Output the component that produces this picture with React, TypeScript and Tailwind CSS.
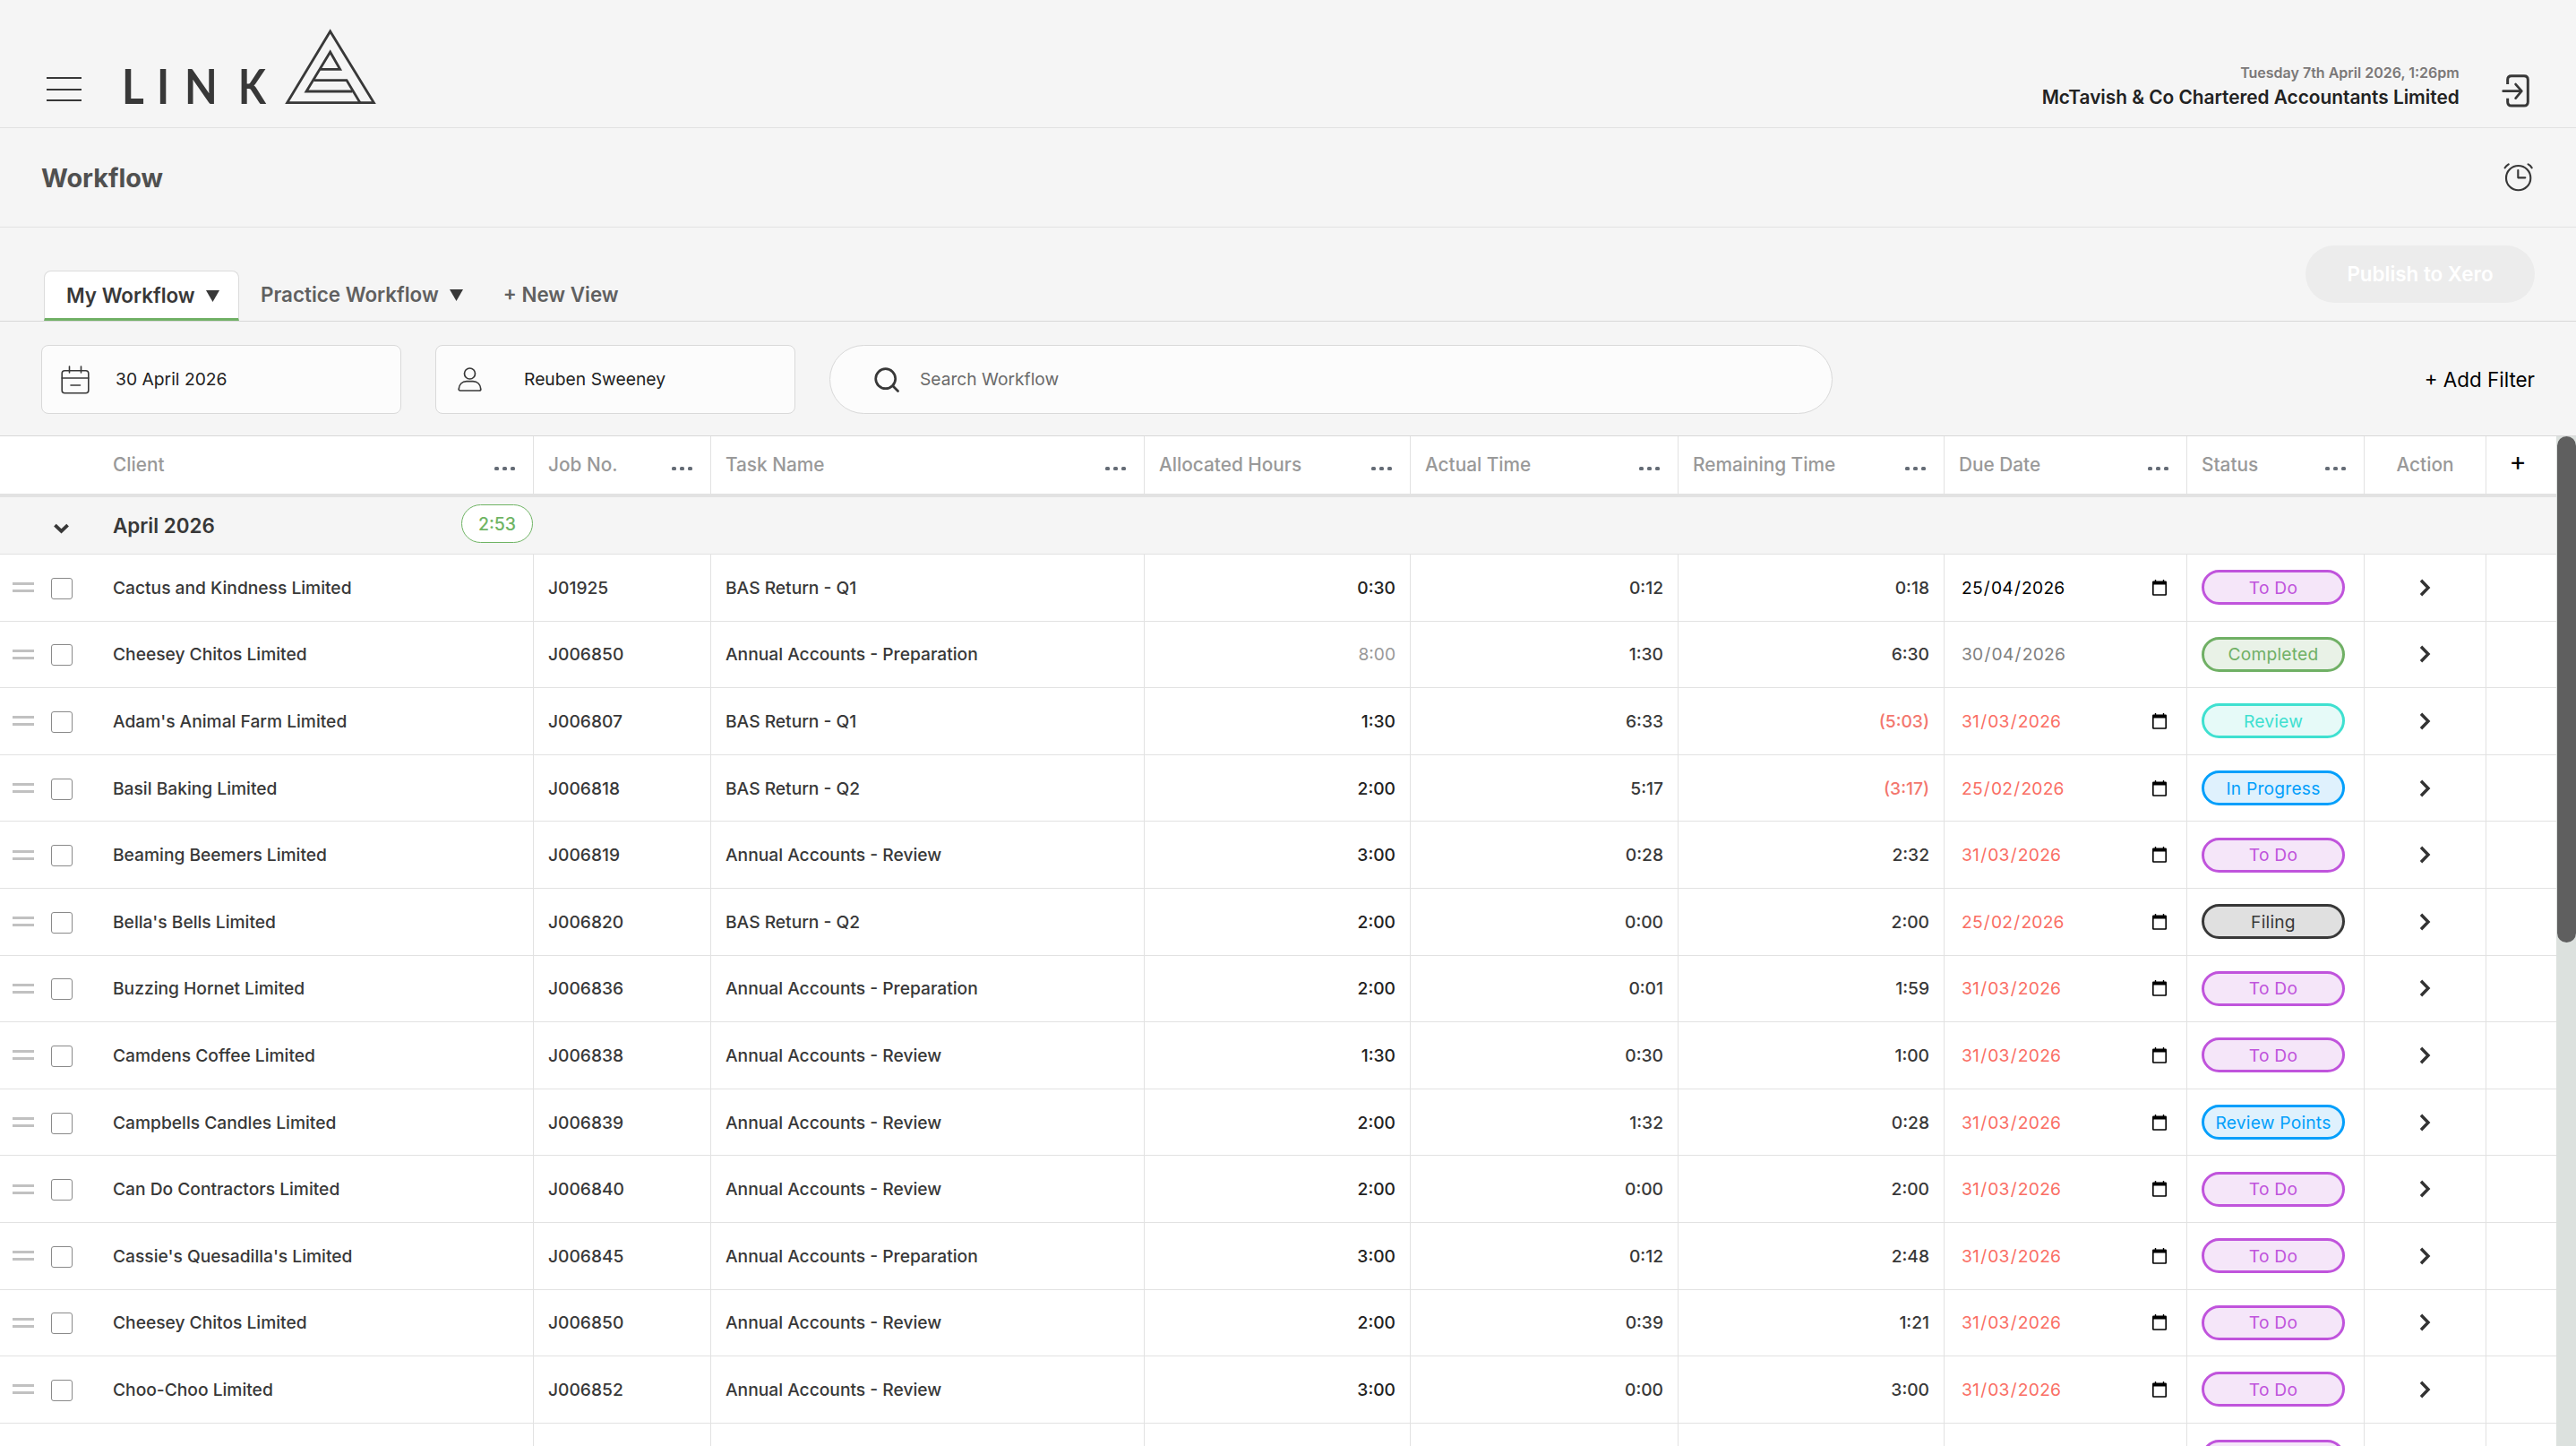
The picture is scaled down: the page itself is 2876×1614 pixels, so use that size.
import clsx from 'clsx';

type Status = 'To Do' | 'Completed' | 'Review' | 'In Progress' | 'Filing' | 'Review Points';

interface Task {
  client: string;
  job: string;
  task: string;
  allocated: string;
  actual: string;
  remaining: string;
  due: string;
  status: Status;
}

const tasks: Task[] = [
  { client: 'Cactus and Kindness Limited', job: 'J01925', task: 'BAS Return - Q1', allocated: '0:30', actual: '0:12', remaining: '0:18', due: '25/04/2026', status: 'To Do' },
  { client: 'Cheesey Chitos Limited', job: 'J006850', task: 'Annual Accounts - Preparation', allocated: '8:00', actual: '1:30', remaining: '6:30', due: '30/04/2026', status: 'Completed' },
  { client: "Adam's Animal Farm Limited", job: 'J006807', task: 'BAS Return - Q1', allocated: '1:30', actual: '6:33', remaining: '(5:03)', due: '31/03/2026', status: 'Review' },
  { client: 'Basil Baking Limited', job: 'J006818', task: 'BAS Return - Q2', allocated: '2:00', actual: '5:17', remaining: '(3:17)', due: '25/02/2026', status: 'In Progress' },
  { client: 'Beaming Beemers Limited', job: 'J006819', task: 'Annual Accounts - Review', allocated: '3:00', actual: '0:28', remaining: '2:32', due: '31/03/2026', status: 'To Do' },
  { client: "Bella's Bells Limited", job: 'J006820', task: 'BAS Return - Q2', allocated: '2:00', actual: '0:00', remaining: '2:00', due: '25/02/2026', status: 'Filing' },
  { client: 'Buzzing Hornet Limited', job: 'J006836', task: 'Annual Accounts - Preparation', allocated: '2:00', actual: '0:01', remaining: '1:59', due: '31/03/2026', status: 'To Do' },
  { client: 'Camdens Coffee Limited', job: 'J006838', task: 'Annual Accounts - Review', allocated: '1:30', actual: '0:30', remaining: '1:00', due: '31/03/2026', status: 'To Do' },
  { client: 'Campbells Candles Limited', job: 'J006839', task: 'Annual Accounts - Review', allocated: '2:00', actual: '1:32', remaining: '0:28', due: '31/03/2026', status: 'Review Points' },
  { client: 'Can Do Contractors Limited', job: 'J006840', task: 'Annual Accounts - Review', allocated: '2:00', actual: '0:00', remaining: '2:00', due: '31/03/2026', status: 'To Do' },
  { client: "Cassie's Quesadilla's Limited", job: 'J006845', task: 'Annual Accounts - Preparation', allocated: '3:00', actual: '0:12', remaining: '2:48', due: '31/03/2026', status: 'To Do' },
  { client: 'Cheesey Chitos Limited', job: 'J006850', task: 'Annual Accounts - Review', allocated: '2:00', actual: '0:39', remaining: '1:21', due: '31/03/2026', status: 'To Do' },
  { client: 'Choo-Choo Limited', job: 'J006852', task: 'Annual Accounts - Review', allocated: '3:00', actual: '0:00', remaining: '3:00', due: '31/03/2026', status: 'To Do' },
];

const statusStyle: Record<Status, string> = {
  'To Do': 'border-[#c054dc] bg-[#f5e6f9] text-[#c054dc]',
  Completed: 'border-[#70b065] bg-[#e9f2e7] text-[#70b065]',
  Review: 'border-[#3fe0d0] bg-[#e6faf8] text-[#3fe0d0]',
  'In Progress': 'border-[#039ffb] bg-[#dff1fd] text-[#039ffb]',
  Filing: 'border-[#383838] bg-[#e0e0e0] text-[#383838]',
  'Review Points': 'border-[#039ffb] bg-[#dff1fd] text-[#039ffb]',
};

const GRID = 'grid grid-cols-[596px_198px_484px_297px_299px_297px_271px_198px_136px_78px]';
const CELL = 'flex items-center border-r border-[#e2e2e2] px-4';

function Logo() {
  return (
    <div className="flex items-end">
      <div className="mb-[3px] flex font-['Lato',sans-serif] text-[53px] leading-[53px] font-bold text-[#383838]">
        <span className="w-[39px]">
          <span className="inline-block origin-left scale-x-90">L</span>
        </span>
        <span className="w-[31px]">
          <span className="inline-block origin-left scale-x-90">I</span>
        </span>
        <span className="w-[60px]">
          <span className="inline-block origin-left scale-x-90">N</span>
        </span>
        <span className="w-[51px]">
          <span className="inline-block origin-left scale-x-85">K</span>
        </span>
      </div>
      <svg className="mb-[7px] h-[88.3px] w-[105px]" viewBox="831 30 315 265" fill="none" stroke="#383838" strokeWidth="8.5">
        <path d="M986 45 L842 284 H1132 Z" />
        <path d="M1060 246 H906 L986 114 L1019 172 H953" />
        <path d="M931 209 H1041 L1086 284" />
      </svg>
    </div>
  );
}

function LogoutIcon() {
  return (
    <svg className="h-[38.7px] w-[33.3px]" viewBox="157 65 100 116" fill="none" stroke="#383838">
      <path strokeWidth="9" d="M177 101 V86 Q177 73 190 73 H232 Q245 73 245 86 V160 Q245 173 232 173 H190 Q177 173 177 160 V148" />
      <path strokeWidth="8" strokeLinecap="round" strokeLinejoin="round" d="M162 124 H223 M204 101 L224 124 L204 148" />
    </svg>
  );
}

function AlarmIcon() {
  return (
    <svg className="size-[33.3px]" viewBox="164 362 100 100" fill="none" stroke="#383838" strokeWidth="6.4">
      <circle cx="214" cy="415" r="41" />
      <path strokeLinecap="round" strokeLinejoin="round" d="M213 389 V414 H237" />
      <path strokeLinecap="round" d="M169 381 Q173 374 181 369 M247 369 Q255 373 259 381" />
    </svg>
  );
}

function CalendarIcon() {
  return (
    <svg className="h-8 w-8" viewBox="0 0 32 32" fill="none" stroke="#383838" strokeWidth="1.6" strokeLinecap="round">
      <rect x="1.2" y="5.7" width="29.6" height="25" rx="3" />
      <path d="M1.2 14 H30.8 M9.5 1 V8 M22.5 1 V8 M11 22 H21.5" />
    </svg>
  );
}

function UserIcon() {
  return (
    <svg className="h-[27px] w-[27px]" viewBox="0 0 27 27" fill="none" stroke="#383838" strokeWidth="1.7">
      <circle cx="13.5" cy="7" r="6" />
      <path d="M1.2 24.2 C1.6 19 5 15.7 10 15.7 H17 C22 15.7 25.4 19 25.8 24.2 Q25.8 26 24.2 26 H2.8 Q1.2 26 1.2 24.2 Z" />
    </svg>
  );
}

function SearchIcon() {
  return (
    <svg className="size-7" viewBox="0 0 28 28" fill="none" stroke="#383838" strokeWidth="2.7" strokeLinecap="round">
      <circle cx="12.7" cy="12.7" r="11" />
      <path d="M20.8 20.8 L26.5 26.5" />
    </svg>
  );
}

// native date picker glyph
function PickerIcon() {
  return (
    <svg className="h-[18px] w-4" viewBox="0 0 16 18" fill="#000">
      <path fillRule="evenodd" d="M2.8 0 H4.2 V1.5 H11.8 V0 H13.2 V1.5 H14.8 Q16 1.5 16 2.8 V16.6 Q16 17.8 14.8 17.8 H1.2 Q0 17.8 0 16.6 V2.8 Q0 1.5 1.2 1.5 H2.8 Z M1.6 5.6 V16.3 H14.4 V5.6 Z" />
    </svg>
  );
}

function Caret() {
  return (
    <svg className="h-[13px] w-[15px]" viewBox="0 0 15 13" fill="#383838">
      <path d="M0 0 H15 L7.5 13 Z" />
    </svg>
  );
}

function Dots() {
  return (
    <span className="mt-2 mr-1 flex gap-1">
      <span className="h-1 w-[5px] rounded-[1.5px] bg-[#646b75]" />
      <span className="h-1 w-[5px] rounded-[1.5px] bg-[#646b75]" />
      <span className="h-1 w-[5px] rounded-[1.5px] bg-[#646b75]" />
    </span>
  );
}

function HeadCell({ label, className }: { label: string; className?: string }) {
  return (
    <div className={clsx(CELL, 'justify-between', className)}>
      <span>{label}</span>
      <Dots />
    </div>
  );
}

function DueDate({ value, status }: { value: string; status: Status }) {
  const [d, m, y] = value.split('/');
  const done = status === 'Completed';
  const overdue = !value.includes('/04/');
  return (
    <div className={clsx(CELL, 'justify-between')}>
      <span
        className={clsx(
          'ml-0.5 flex pt-px text-[19.2px] font-normal tracking-[0.23px]',
          done ? 'text-[#808080]' : overdue ? 'text-[#fa6e64]' : 'text-black'
        )}
      >
        <span className="px-px">{d}</span>/<span className="px-px">{m}</span>/<span className="px-px">{y}</span>
      </span>
      {!done && (
        <span className="mr-1.5">
          <PickerIcon />
        </span>
      )}
    </div>
  );
}

function StatusPill({ status }: { status: Status }) {
  return (
    <span
      className={clsx(
        'flex h-[39px] w-40 items-center justify-center rounded-full border-3 pt-px text-[19.2px] font-normal tracking-[0.23px]',
        statusStyle[status]
      )}
    >
      {status}
    </span>
  );
}

function TaskRow({ task }: { task: Task }) {
  const done = task.status === 'Completed';
  const over = task.remaining.startsWith('(');
  return (
    <div className={clsx(GRID, 'h-[74.6px] border-b border-[#e2e2e2] text-[19.22px] font-medium text-[#383838]')}>
      <div className="flex items-center border-r border-[#e2e2e2] pl-3.5">
        <span className="flex w-6 flex-col gap-[5px]">
          <span className="h-[3px] bg-[#c1c1c1]" />
          <span className="h-[3px] bg-[#c1c1c1]" />
        </span>
        <span className="mt-0.5 mr-[45px] ml-[19px] size-6 rounded-[3px] border border-[#8a8a8a] bg-white" />
        <span className="pt-px">{task.client}</span>
      </div>
      <div className={clsx(CELL, 'pt-px')}>{task.job}</div>
      <div className={clsx(CELL, 'pt-px')}>{task.task}</div>
      <div className={clsx(CELL, 'justify-end pt-px', done ? 'font-normal text-[#999]' : 'text-[#222]')}>{task.allocated}</div>
      <div className={clsx(CELL, 'justify-end pt-px')}>{task.actual}</div>
      <div className={clsx(CELL, 'justify-end pt-px', over && 'text-[#f3766d]')}>{task.remaining}</div>
      <DueDate value={task.due} status={task.status} />
      <div className={CELL}>
        <StatusPill status={task.status} />
      </div>
      <div className={clsx(CELL, 'justify-center')}>
        <svg className="h-5 w-3" viewBox="0 0 12 20" fill="none" stroke="#333" strokeWidth="3.4">
          <path d="M1 1.8 L9 10 L1 18.2" />
        </svg>
      </div>
      <div />
    </div>
  );
}

export default function App() {
  return (
    <div className="flex h-[1614px] w-[2876px] flex-col overflow-hidden bg-[#f5f5f5] font-['Inter',sans-serif] text-[#383838]">
      <header className="flex h-[143px] shrink-0 items-end border-b border-[#e2e2e2] pl-[52px]">
        <div className="mb-[29px] flex w-[39px] flex-col justify-between gap-[10.5px]">
          <span className="h-0.5 bg-[#383838]" />
          <span className="h-0.5 bg-[#383838]" />
          <span className="h-0.5 bg-[#383838]" />
        </div>
        <div className="mb-[17px] ml-[45px]">
          <Logo />
        </div>
        <div className="mb-5 ml-auto text-right leading-[27px] font-semibold">
          <div className="text-base leading-[27px] text-[#7b7878]">Tuesday 7th April 2026, 1:26pm</div>
          <div className="text-[20.8px] leading-[27px] text-[#222]">McTavish &amp; Co Chartered Accountants Limited</div>
        </div>
        <div className="mr-[50px] mb-[21px] ml-[47px]">
          <LogoutIcon />
        </div>
      </header>

      <div className="flex h-[111px] shrink-0 items-center justify-between border-b border-[#e2e2e2] pr-12 pl-[46px]">
        <h1 className="pt-px text-[28.8px] font-bold text-[#505050]">Workflow</h1>
        <AlarmIcon />
      </div>

      <div className="flex h-[105px] shrink-0 items-end border-b border-[#d8d8d8] pr-[46px] pl-[49px] text-[22.4px] font-semibold">
        <div className="flex h-14 w-[218px] items-center gap-3 rounded-t-lg border border-b-3 border-[#dcdcdc] border-b-[#70b065] bg-white pt-0.5 pl-6">
          My Workflow
          <Caret />
        </div>
        <div className="ml-6 flex h-[58px] items-center gap-3 text-[#606060]">
          Practice Workflow
          <Caret />
        </div>
        <div className="ml-[45px] flex h-[58px] items-center text-[#606060]">+ New View</div>
        <div className="mb-5 ml-auto flex h-16 w-64 items-center justify-center rounded-full bg-[#ececec] text-white">
          Publish to Xero
        </div>
      </div>

      <div className="flex h-[128px] shrink-0 items-center gap-[38px] border-b border-[#d8d8d8] pt-0.5 pr-[46px] pl-[46px] text-[19.3px] text-[#222]">
        <div className="flex h-[77px] w-[402px] items-center rounded-lg border border-[#d9d9d9] bg-[#fcfcfc] pl-[21px]">
          <CalendarIcon />
          <span className="ml-[29px]">30 April 2026</span>
        </div>
        <div className="flex h-[77px] w-[402px] items-center rounded-lg border border-[#d9d9d9] bg-[#fcfcfc] pl-6">
          <UserIcon />
          <span className="ml-[47px]">Reuben Sweeney</span>
        </div>
        <div className="flex h-[77px] w-[1120px] items-center rounded-full border border-[#d9d9d9] bg-[#fcfcfc] pl-[49px] text-[19.2px] text-[#6a6a6a]">
          <SearchIcon />
          <span className="ml-[23px]">Search Workflow</span>
        </div>
        <span className="ml-auto text-[22.4px] text-black">+ Add Filter</span>
      </div>

      <div className="flex min-h-0 flex-1">
        <div className="w-[2854px] shrink-0 overflow-hidden bg-white">
          {/* Column headings */}
          <div className={clsx(GRID, 'h-[68px] border-b-4 border-[#e2e2e2] text-[20.8px] font-medium text-[#999]')}>
            <HeadCell label="Client" className="pl-[126px]" />
            <HeadCell label="Job No." />
            <HeadCell label="Task Name" />
            <HeadCell label="Allocated Hours" />
            <HeadCell label="Actual Time" />
            <HeadCell label="Remaining Time" />
            <HeadCell label="Due Date" />
            <HeadCell label="Status" />
            <div className={clsx(CELL, 'justify-center')}>Action</div>
            <div className="flex items-center justify-center pr-2 pb-2 text-[29px] font-normal text-black">+</div>
          </div>

          {/* Month group */}
          <div className="flex h-16 items-center border-b border-[#e2e2e2] bg-[#f5f5f5]">
            <svg className="mt-[7px] ml-[60px] h-3 w-[17px]" viewBox="0 0 18 12" fill="none" stroke="#383838" strokeWidth="4">
              <path d="M1.5 1.8 L9 9 L16.5 1.8" />
            </svg>
            <span className="ml-[49px] w-[389px] text-[22.4px] font-semibold">April 2026</span>
            <span className="mb-[4px] flex h-[43px] w-20 items-center justify-center rounded-full border border-[#6fb464] bg-white pt-0.5 text-[19.5px] font-medium text-[#6fb464]">
              2:53
            </span>
          </div>

          {tasks.map((task) => (
            <TaskRow key={task.job + task.task} task={task} />
          ))}

          {/* Next row, only its status outline reaches into view */}
          <div className={clsx(GRID, 'h-[74.6px]')}>
            <div className={CELL} />
            <div className={CELL} />
            <div className={CELL} />
            <div className={CELL} />
            <div className={CELL} />
            <div className={CELL} />
            <div className={CELL} />
            <div className={CELL}>
              <span className="h-[39px] w-40 rounded-full border-3 border-[#c054dc] bg-[#f5e6f9]" />
            </div>
            <div className={CELL} />
            <div />
          </div>
        </div>
        <div className="flex-1 bg-[#dce1de] pl-px">
          <div className="h-[565px] rounded-full bg-[#5f5f5f]" />
        </div>
      </div>
    </div>
  );
}
